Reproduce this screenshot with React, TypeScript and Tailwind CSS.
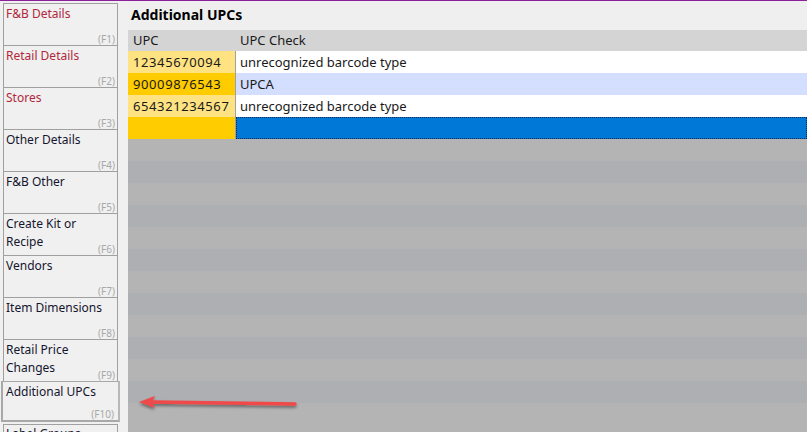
import React from 'react';

const TABS = [
    { label: ['F&B Details'], key: 'F1', red: true },
    { label: ['Retail Details'], key: 'F2', red: true },
    { label: ['Stores'], key: 'F3', red: true },
    { label: ['Other Details'], key: 'F4' },
    { label: ['F&B Other'], key: 'F5' },
    { label: ['Create Kit or', 'Recipe'], key: 'F6' },
    { label: ['Vendors'], key: 'F7' },
    { label: ['Item Dimensions'], key: 'F8' },
    { label: ['Retail Price', 'Changes'], key: 'F9' },
];

const ROWS = [
    { upc: '12345670094', check: 'unrecognized barcode type', alt: false },
    { upc: '90009876543', check: 'UPCA', alt: true },
    { upc: '654321234567', check: 'unrecognized barcode type', alt: false },
];

export default function App() {
    return (
        <div
            className="relative w-[807px] h-[432px] overflow-hidden bg-[#f0f0f0] border-t border-[#8e1f9c] flex text-[13px] text-[#1a1a1a]"
            style={{ fontFamily: '"Noto Sans", "Open Sans", sans-serif' }}
        >
            {/* Tabs */}
            <div className="w-[128px] shrink-0 flex flex-col pt-[2px] text-[12px]">
                {TABS.map((tab) => (
                    <div
                        key={tab.key}
                        className="relative ml-[3px] w-[115px] h-[42px] shrink-0 border-x border-t border-[#a0a0a0] px-[2px] pt-[1px] leading-[18px]"
                    >
                        {tab.label.map((l) => (
                            <div key={l} className={tab.red ? 'text-[#b0283a]' : 'text-[#15152e]'}>
                                {l}
                            </div>
                        ))}
                        <span className="absolute right-[2px] bottom-[0px] text-[10px] leading-[12px] text-[#a8a8a8]">
                            ({tab.key})
                        </span>
                    </div>
                ))}
                <div className="relative ml-[1px] w-[119px] h-[41px] shrink-0 border-2 border-t border-[#a8a8a8] border-r-[#b8b8b8] px-[3px] pt-[1px] leading-[18px] text-[#15152e]">
                    Additional UPCs
                    <span className="absolute right-[4px] bottom-[0px] text-[10px] leading-[12px] text-[#a8a8a8]">
                        (F10)
                    </span>
                </div>
                <div className="ml-[3px] mt-[2px] w-[115px] h-[42px] shrink-0 border-x border-t border-[#a0a0a0] px-[2px] leading-[18px] text-[#15152e]">
                    Label Groups
                </div>
            </div>

            {/* Main */}
            <div className="flex-1 flex flex-col">
                <div className="h-[29px] shrink-0 bg-[#efefef] px-[3px] pt-[5px] text-[14px] font-bold leading-[18px] text-black">
                    Additional UPCs
                </div>
                <div className="flex-1 flex flex-col bg-[#b4b4b4]">
                    <div className="h-[21px] shrink-0 flex bg-[#d4d4d4] leading-[21px]">
                        <div className="w-[108px] pl-[5px]">UPC</div>
                        <div className="pl-[4px]">UPC Check</div>
                    </div>
                    {ROWS.map((r) => (
                        <div key={r.upc} className="h-[22px] shrink-0 flex leading-[22px]">
                            <div
                                className={`w-[108px] pl-[5px] tracking-[0.6px] border-r border-[#a0a0a0] ${r.alt ? 'bg-[#ffcc00]' : 'bg-[#ffe382]'}`}
                            >
                                {r.upc}
                            </div>
                            <div className={`flex-1 pl-[4px] ${r.alt ? 'bg-[#d4defe]' : 'bg-white'}`}>{r.check}</div>
                        </div>
                    ))}
                    <div className="h-[22px] shrink-0 flex">
                        <div className="w-[108px] bg-[#ffcc00] border-r border-[#a0a0a0]" />
                        <div className="flex-1 bg-[#0078d7] border border-dotted border-[#0a2a55]" />
                    </div>
                    {Array.from({ length: 13 }).map((_, i) => (
                        <div
                            key={i}
                            className={`h-[22px] shrink-0 ${i % 2 === 0 ? 'bg-[#b4b4b4]' : 'bg-[#aeafb2]'}`}
                        />
                    ))}
                </div>
            </div>

            {/* Annotation arrow */}
            <svg className="absolute left-[130px] top-[390px]" width="180" height="26" viewBox="0 0 180 26">
                <defs>
                    <filter id="sh" x="-10%" y="-50%" width="120%" height="200%">
                        <feDropShadow dx="0" dy="2" stdDeviation="1.5" floodColor="#000" floodOpacity="0.45" />
                    </filter>
                </defs>
                <g filter="url(#sh)">
                    <line x1="22" y1="11" x2="165" y2="13" stroke="#f04848" strokeWidth="3.5" strokeLinecap="round" />
                    <polygon points="9,11 25,5 22,11 25,17" fill="#f04848" />
                </g>
            </svg>
        </div>
    );
}
